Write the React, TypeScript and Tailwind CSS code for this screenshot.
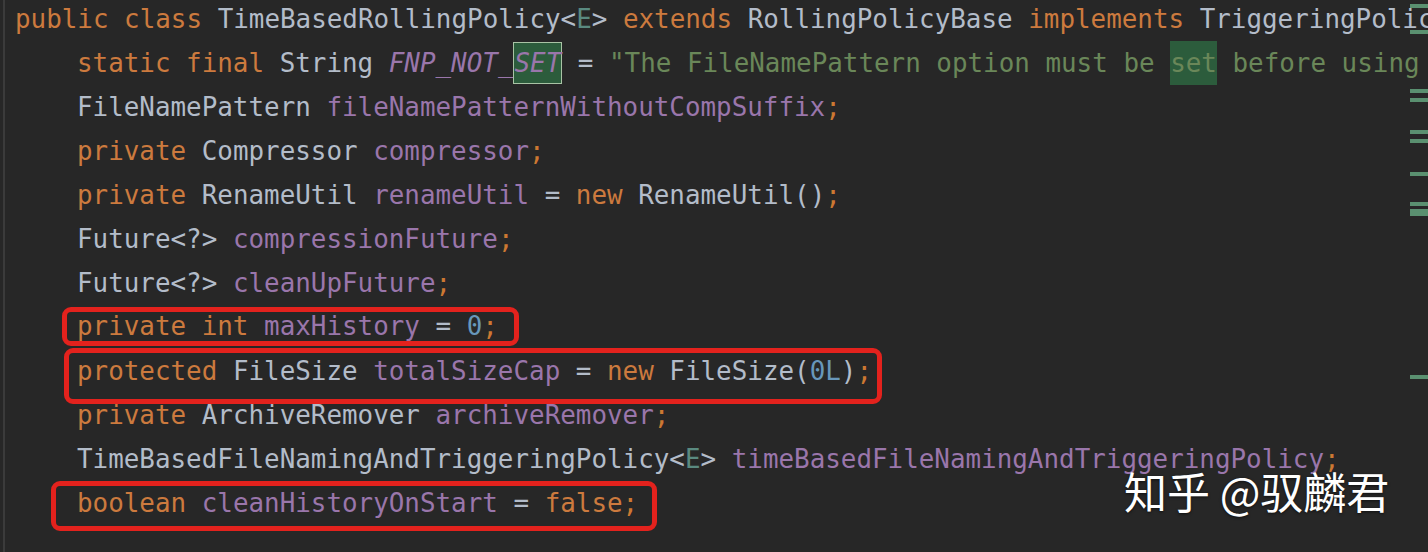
import React from "react";

// token colours, Darcula-ish
const kw = "text-[#cc7a3e]";
const ty = "text-[#b3bcc9]";
const fld = "text-[#9a76ab]";
const str = "text-[#6a8759]";
const num = "text-[#6897bb]";
const gen = "text-[#5a8a80]";
const op = "text-[#b3bcc9]";
const semi = "text-[#cc7832]";

type Tok = [string, string];

// box: classes for the red annotation drawn round a line
const lines: { toks: Tok[]; box?: string }[] = [
  {
    toks: [
      ["FileNamePattern ", ty],
      ["fileNamePatternWithoutCompSuffix", fld],
      [";", semi],
    ],
  },
  {
    toks: [
      ["private ", kw],
      ["Compressor ", ty],
      ["compressor", fld],
      [";", semi],
    ],
  },
  {
    toks: [
      ["private ", kw],
      ["RenameUtil ", ty],
      ["renameUtil ", fld],
      ["= ", op],
      ["new ", kw],
      ["RenameUtil()", ty],
      [";", semi],
    ],
  },
  {
    toks: [
      ["Future<?> ", ty],
      ["compressionFuture", fld],
      [";", semi],
    ],
  },
  {
    toks: [
      ["Future<?> ", ty],
      ["cleanUpFuture", fld],
      [";", semi],
    ],
  },
  {
    toks: [
      ["private int ", kw],
      ["maxHistory ", fld],
      ["= ", op],
      ["0", num],
      [";", semi],
    ],
    box: "mt-[2px] h-[39px] leading-[29px] -ml-[15px] pl-[10px] pr-[16px]",
  },
  {
    toks: [
      ["protected ", kw],
      ["FileSize ", ty],
      ["totalSizeCap ", fld],
      ["= ", op],
      ["new ", kw],
      ["FileSize(", ty],
      ["0L", num],
      [")", ty],
      [";", semi],
    ],
    box: "-mt-[1px] h-[56px] leading-[36px] -ml-[13px] pl-[8px] pr-[5px]",
  },
  {
    toks: [
      ["private ", kw],
      ["ArchiveRemover ", ty],
      ["archiveRemover", fld],
      [";", semi],
    ],
  },
  {
    toks: [
      ["TimeBasedFileNamingAndTriggeringPolicy<", ty],
      ["E", gen],
      ["> ", ty],
      ["timeBasedFileNamingAndTriggeringPolicy", fld],
      [";", semi],
    ],
  },
  {
    toks: [
      ["boolean ", kw],
      ["cleanHistoryOnStart ", fld],
      ["= ", op],
      ["false", kw],
      [";", semi],
    ],
    box: "mt-0 h-[50px] leading-[34px] -ml-[26px] pl-[21px] pr-[14px]",
  },
];

const markers = [
  { top: 4, h: 4 },
  { top: 30, h: 4 },
  { top: 89, h: 4 },
  { top: 98, h: 4 },
  { top: 130, h: 4 },
  { top: 139, h: 4 },
  { top: 172, h: 4 },
  { top: 202, h: 4 },
  { top: 209, h: 7 },
  { top: 375, h: 4 },
];

const Line = ({ toks, box }: { toks: Tok[]; box?: string }) => {
  const body = toks.map(([t, c], i) => (
    <span key={i} className={c}>
      {t}
    </span>
  ));
  return (
    <div className="h-[44px] leading-[44px] whitespace-pre pl-[62px]">
      {box ? (
        <span
          className={`inline-block align-top box-border border-[5px] border-[#e3221d] rounded-[9px] ${box}`}
        >
          {body}
        </span>
      ) : (
        body
      )}
    </div>
  );
};

export default function App() {
  return (
    <div className="relative w-[1428px] h-[552px] overflow-hidden bg-[#272727]">
      <div className="flex h-full">
        <div className="w-[3px] shrink-0" />
        <div className="w-[2px] shrink-0 bg-[#3b3b3b]" />
        <div
          className="pl-[10px] mt-[-3px] text-[25.9px]"
          style={{ fontFamily: '"DejaVu Sans Mono", "Liberation Mono", monospace' }}
        >
          <div className="h-[44px] leading-[44px] whitespace-pre">
            <span className={kw}>public class </span>
            <span className={ty}>TimeBasedRollingPolicy&lt;</span>
            <span className={gen}>E</span>
            <span className={ty}>&gt; </span>
            <span className={kw}>extends </span>
            <span className={ty}>RollingPolicyBase </span>
            <span className={kw}>implements </span>
            <span className={ty}>TriggeringPolicy&lt;</span>
            <span className={gen}>E</span>
            <span className={ty}>&gt; {"{"}</span>
          </div>
          <div className="h-[44px] leading-[44px] whitespace-pre pl-[62px]">
            <span className={kw}>static final </span>
            <span className={ty}>String </span>
            <span className={`${fld} italic`}>FNP_NOT_</span>
            <span
              className={`${fld} italic inline-block box-border h-[42px] leading-[40px] align-top mt-px bg-[#2c5c3c] border border-[#a9c3a5]`}
            >
              SET
            </span>
            <span className={op}> = </span>
            <span className={str}>"The FileNamePattern option must be </span>
            <span className={`${str} inline-block bg-[#2c5c3c]`}>set</span>
            <span className={str}> before using TimeBasedRollingPolicy. "</span>
          </div>
          {lines.map((l, i) => (
            <Line key={i} {...l} />
          ))}
        </div>
      </div>

      {/* scrollbar markers in the right gutter */}
      {markers.map((m, i) => (
        <div
          key={i}
          className="absolute right-0 w-[18px] bg-[#5a9070]"
          style={{ top: m.top, height: m.h }}
        />
      ))}

      {/* watermark */}
      <div
        className="absolute left-[1124px] top-[465px] text-[43px] leading-[50px] text-white whitespace-pre [text-shadow:0_1px_3px_rgba(0,0,0,0.6)]"
        style={{ fontFamily: '"Noto Sans CJK SC", "Noto Sans", sans-serif' }}
      >
        知乎 @驭麟君
      </div>
    </div>
  );
}
